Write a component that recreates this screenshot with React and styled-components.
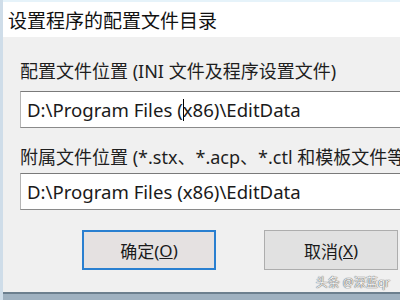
import React from 'react';
import styled, { createGlobalStyle } from 'styled-components';

const GlobalStyle = createGlobalStyle`
  html, body {
    margin: 0;
    padding: 0;
    background: #f0f0f0;
  }
  body {
    font-family: "Noto Sans", "Noto Sans CJK SC", sans-serif;
  }
`;

const Window = styled.div`
  width: 400px;
  height: 300px;
  overflow: hidden;
  display: flex;
  flex-direction: column;
  border-left: 3px solid #cfdde9;
  box-sizing: border-box;
  position: relative;
`;

const TitleBar = styled.div`
  height: 37px;
  flex-shrink: 0;
  background: #ffffff;
  border-top: 2px solid #e6f3fa;
  box-sizing: border-box;
  display: flex;
  align-items: center;
  padding-left: 5px;
  font-size: 19px;
  color: #111;
  white-space: nowrap;
`;

const Body = styled.div`
  flex: 1;
  background: #f0f0f0;
  display: flex;
  flex-direction: column;
  padding: 23px 0 0 17px;
  box-sizing: border-box;
`;

const Label = styled.div`
  font-size: 18px;
  line-height: 22px;
  color: #1e1e1e;
  white-space: nowrap;
  margin-bottom: ${props => props.$gap || 6}px;
`;

const Field = styled.div`
  width: 400px;
  height: 37px;
  flex-shrink: 0;
  box-sizing: border-box;
  background: #ffffff;
  border: 1px solid #b5b5b5;
  border-top-color: #7a7a7a;
  border-bottom-color: #8a8a8a;
  display: flex;
  align-items: center;
  padding-left: 6px;
  font-size: 18.6px;
  color: #1a1a1a;
  white-space: nowrap;
  margin-bottom: ${props => props.$gap || 0}px;
`;

const Caret = styled.span`
  display: inline-block;
  width: 1px;
  height: 22px;
  background: #000;
  vertical-align: middle;
  margin: 0 -1px 0 0;
`;

const ButtonRow = styled.div`
  display: flex;
  gap: 48px;
  padding-left: 62px;
`;

const Button = styled.div`
  width: ${props => props.$w}px;
  height: 40px;
  box-sizing: border-box;
  display: flex;
  align-items: center;
  justify-content: center;
  font-size: 17px;
  color: #1a1a1a;
  background: ${props => (props.$primary ? '#e5e1e1' : '#e1e1e1')};
  border: ${props => (props.$primary ? '2px solid #2a7fd0' : '1px solid #adadad')};
`;

const Underline = styled.span`
  text-decoration: underline;
`;

const BottomEdge = styled.div`
  height: 8px;
  flex-shrink: 0;
  background: #9fb1c0;
  border-top: 2px solid #6c7f8e;
  box-sizing: border-box;
`;

const Watermark = styled.div`
  position: absolute;
  right: 10px;
  bottom: 9px;
  font-size: 12px;
  color: #f4f4f4;
  text-shadow: 0 0 1px #555, 0 0 1px #555;
  white-space: nowrap;
`;

export default function App() {
  return (
    <>
      <GlobalStyle />
      <Window>
        <TitleBar>设置程序的配置文件目录</TitleBar>
        <Body>
          <Label $gap={9}>配置文件位置 (INI 文件及程序设置文件)</Label>
          <Field $gap={18}>
            D:\Program Files (<Caret />x86)\EditData
          </Field>
          <Label $gap={5}>附属文件位置 (*.stx、*.acp、*.ctl 和模板文件等)</Label>
          <Field $gap={20}>D:\Program Files (x86)\EditData</Field>
          <ButtonRow>
            <Button $primary $w={134}>
              确定(<Underline>O</Underline>)
            </Button>
            <Button $w={134}>
              取消(<Underline>X</Underline>)
            </Button>
          </ButtonRow>
        </Body>
        <BottomEdge />
        <Watermark>头条 @深蓝qr</Watermark>
      </Window>
    </>
  );
}
